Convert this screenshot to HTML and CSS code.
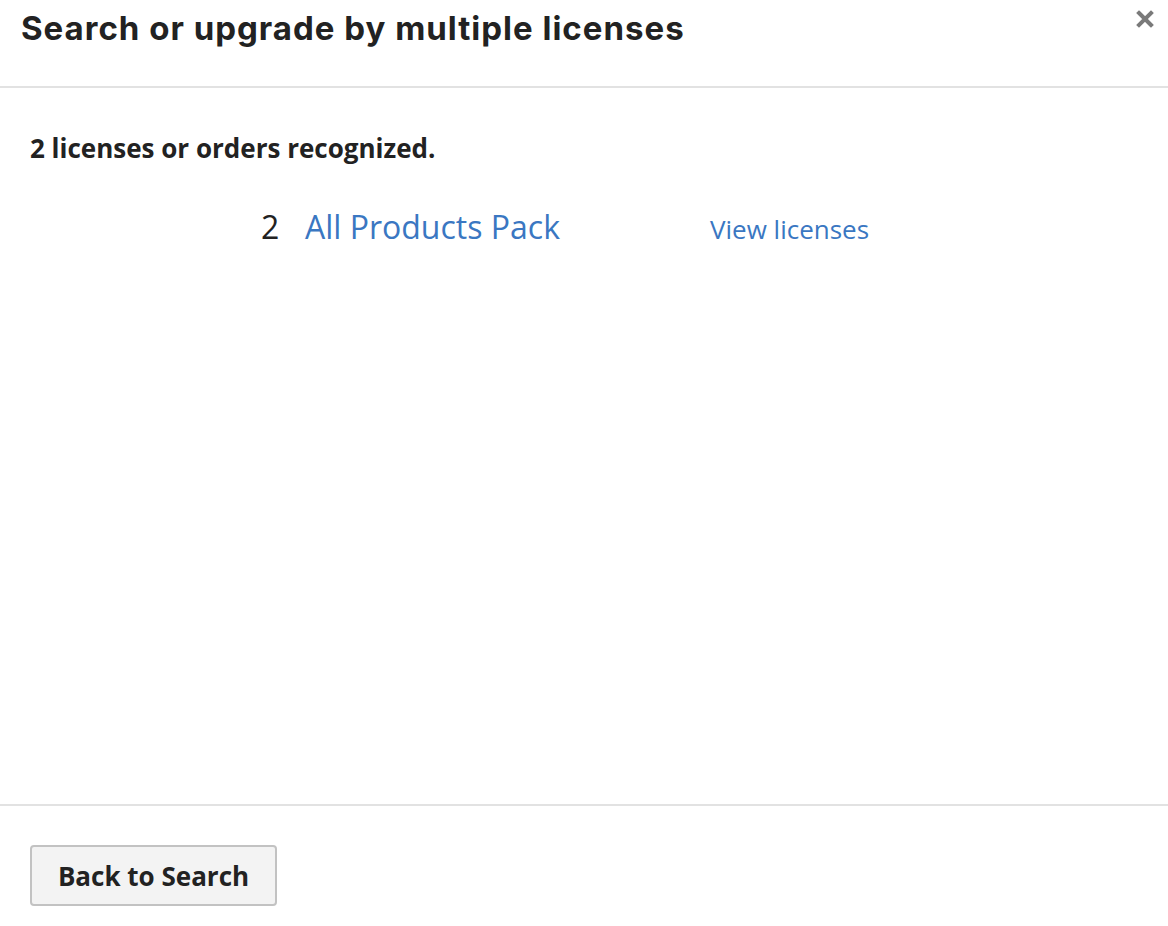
FILE: index.html
```html
<!DOCTYPE html>
<html>
<head>
  <title>Search or upgrade by multiple licenses</title>
  <link rel="stylesheet" href="styles.css">
</head>
<body>
  <div class="modal">
    <div class="modal-header">
      <h2>Search or upgrade by multiple licenses</h2>
      <button class="modal-close" aria-label="Close">
        <svg width="18" height="18" viewBox="0 0 18 18">
          <path d="M3 3 L15 15 M15 3 L3 15" stroke="#7a7a7a" stroke-width="4" stroke-linecap="square"/>
        </svg>
      </button>
    </div>

    <div class="modal-body">
      <p class="recognized">2 licenses or orders recognized.</p>
      <div class="license-row">
        <span class="license-count">2</span>
        <a href="#" class="license-product">All Products Pack</a>
        <a href="#" class="license-view">View licenses</a>
      </div>
    </div>

    <div class="modal-footer">
      <button class="btn-back">Back to Search</button>
    </div>
  </div>
</body>
</html>
```

FILE: styles.css
```css
/* Base */
body {
  margin: 0;
  background: #fff;
  font-family: "Open Sans", "Liberation Sans", sans-serif;
  color: #222;
}

.modal {
  width: 1168px;
  height: 926px;
  display: flex;
  flex-direction: column;
}

/* Header */
.modal-header {
  position: relative;
  height: 86px;
  border-bottom: 2px solid #e2e2e2;
  padding: 0 21px;
}

.modal-header h2 {
  margin: 0;
  padding-top: 8px;
  font-family: "Inter", "Liberation Sans", sans-serif;
  font-weight: 700;
  font-size: 33px;
  line-height: 40px;
  letter-spacing: 1px;
  color: #222;
}

.modal-close {
  position: absolute;
  top: 10px;
  right: 14px;
  background: none;
  border: 0;
  padding: 0;
  cursor: pointer;
}

/* Body */
.modal-body {
  flex: 1;
  padding: 0 30px;
}

.recognized {
  margin: 42px 0 0;
  font-weight: 700;
  font-size: 26px;
  line-height: 36px;
}

.license-row {
  display: flex;
  align-items: baseline;
  margin-top: 39px;
  padding-left: 231px;
  line-height: 44px;
}

.license-count {
  font-size: 32px;
  width: 44px;
}

.license-product {
  font-size: 32px;
  color: #3a77c2;
  text-decoration: none;
  width: 405px;
}

.license-view {
  font-size: 26px;
  color: #3a77c2;
  text-decoration: none;
}

/* Footer */
.modal-footer {
  border-top: 2px solid #e2e2e2;
  height: 122px;
  padding: 39px 30px 0;
  box-sizing: border-box;
}

.btn-back {
  font-family: "Open Sans", "Liberation Sans", sans-serif;
  font-weight: 700;
  font-size: 26px;
  color: #222;
  background: #f3f3f3;
  border: 2px solid #c2c2c2;
  border-radius: 4px;
  width: 247px;
  height: 61px;
  cursor: pointer;
}
```
